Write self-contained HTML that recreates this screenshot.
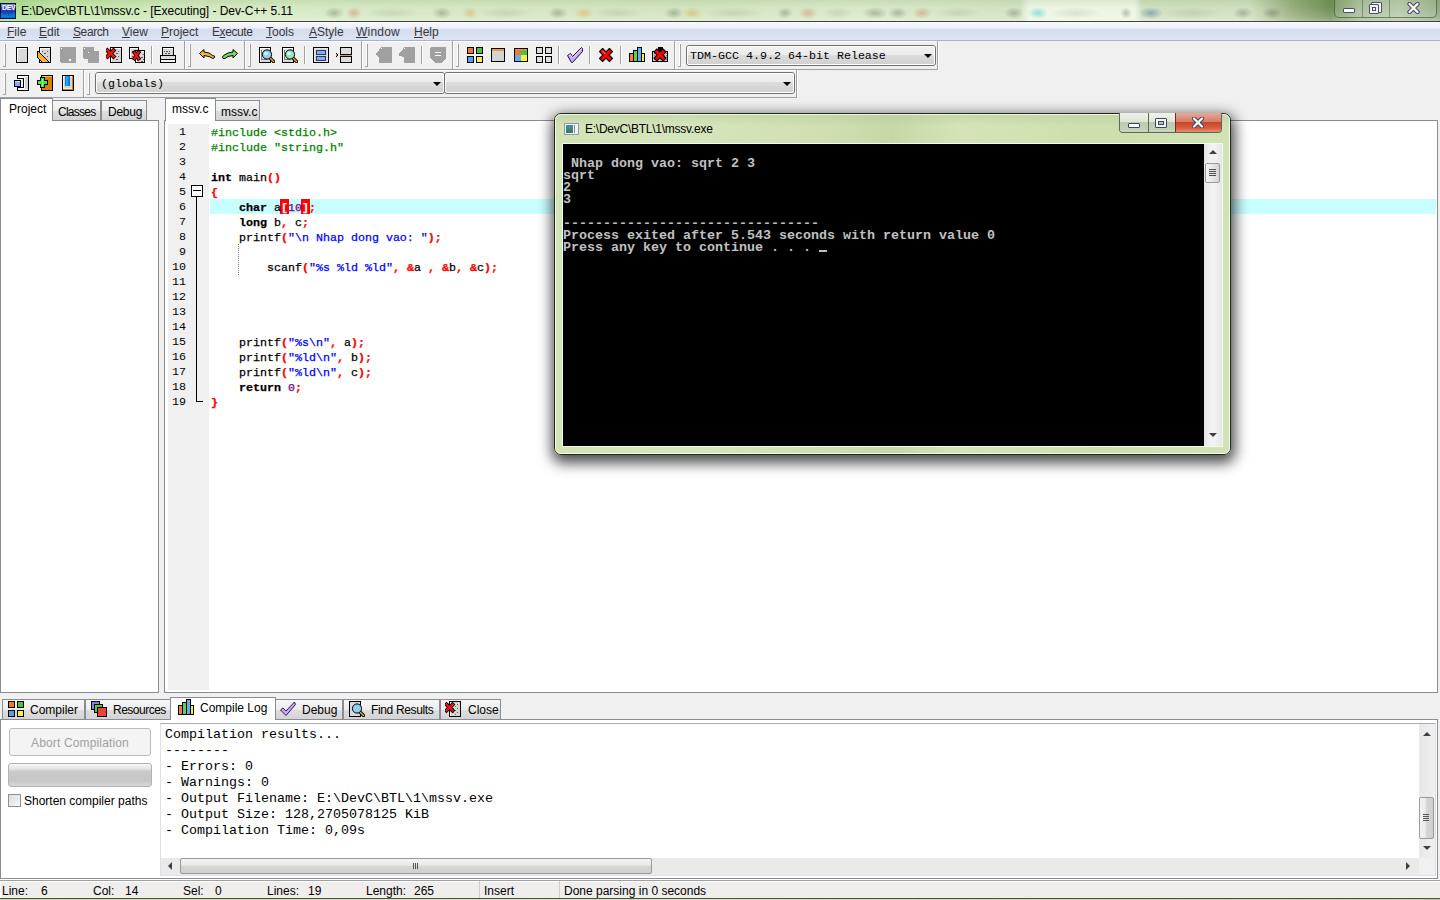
<!DOCTYPE html>
<html><head><meta charset="utf-8">
<style>
*{margin:0;padding:0;box-sizing:border-box}
html,body{width:1440px;height:900px;overflow:hidden;background:#f0f0f0;font-family:"Liberation Sans",sans-serif;font-size:12px;color:#000;position:relative}
.a{position:absolute}
#title{left:0;top:0;width:1440px;height:22px;border-bottom:1px solid #3a4a34;background:linear-gradient(180deg,rgba(90,130,60,0.12) 0,rgba(255,255,255,0) 35%,rgba(255,255,255,0.15) 80%,rgba(255,255,255,0.3) 100%),linear-gradient(90deg,#a8dc8c 0%,#c4e6a8 4.2%,#d2e8bd 13.9%,#d6e9c4 20.8%,#d4e6c2 34.7%,#d2e4c0 48.6%,#d8e8c8 59.7%,#d2e2c2 70.8%,#ecf5e2 71.5%,#ecf5e2 78.8%,#d0e0c0 79.3%,#cfdfbf 86.8%,#9ab080 89.6%,#6f8f55 92.4%,#a0b890 94.4%,#b0c4a0 97.2%,#90a880 100%)}
#title .t{position:absolute;left:21px;top:4px;color:#000;font-size:12px;letter-spacing:-0.05px}
#menu{left:0;top:22px;width:1440px;height:19px;background:linear-gradient(#f7f9fd 0,#eef2f9 30%,#d6ddef 42%,#dce3f2 100%);border-bottom:1px solid #aab4c9}
.mi{position:absolute;top:3px;color:#383838;font-size:12px}
.tbar{position:absolute;background:#f0f0f0;border-left:1px solid #fff;border-top:1px solid #fff;border-right:1px solid #a0a0a0;border-bottom:1px solid #a0a0a0}
.grip{position:absolute;width:3px;border-left:1px solid #a6a6a6;border-right:1px solid #fff}
.sep{position:absolute;width:2px;border-left:1px solid #a0a0a0;border-right:1px solid #fff;height:17px}
.ic{position:absolute;width:16px;height:16px}
.combo{position:absolute;border:1px solid #707070;border-radius:3px;background:linear-gradient(#f2f2f2 0,#ebebeb 45%,#dddddd 46%,#cfcfcf 100%)}
.combo .ct{position:absolute;left:3px;top:3px;font-family:"Liberation Mono",monospace;font-size:11.67px;color:#000;white-space:pre}
.arr{position:absolute;width:0;height:0;border-left:4px solid transparent;border-right:4px solid transparent;border-top:4px solid #000}
.combo .ci{position:absolute;left:0;top:0;right:0;bottom:0;border:1px solid #fff;border-radius:2px}
.tab{position:absolute;border:1px solid #898c95;border-bottom:none;background:linear-gradient(#f6f6f6 0,#ececec 50%,#dedede 52%,#d4d4d4 100%);font-size:12px;color:#000}
.tab.act{background:#fff}
.tab span{position:absolute;white-space:pre}
.code{position:absolute;font-family:"Liberation Mono",monospace;font-size:11.67px;white-space:pre;line-height:15px;-webkit-text-stroke:0.25px currentColor}
.k{font-weight:bold}
.g{color:#008000}
.r{color:#ff0000;font-weight:bold}
.s{color:#0000ff}
.n{color:#800080}
.ln{position:absolute;left:168px;width:18px;margin-top:1px;text-align:right;font-family:"Liberation Mono",monospace;font-size:11.67px;line-height:15px;color:#000}
.bh{color:#fff;font-weight:bold}
.st{position:absolute;margin-top:1px;font-size:12px;color:#000;white-space:pre}
</style></head><body>

<!-- TITLE BAR -->
<div id="title" class="a">
  <div class="a" style="left:0;top:0;width:1440px;height:21px;background:radial-gradient(10px 6px at 334px 13px,rgba(60,70,50,0.3),rgba(60,70,50,0)),radial-gradient(10px 6px at 442px 13px,rgba(60,70,50,0.3),rgba(60,70,50,0)),radial-gradient(10px 6px at 558px 13px,rgba(60,70,50,0.3),rgba(60,70,50,0)),radial-gradient(10px 6px at 674px 13px,rgba(60,70,50,0.3),rgba(60,70,50,0)),radial-gradient(8px 6px at 785px 13px,rgba(60,70,50,0.3),rgba(60,70,50,0)),radial-gradient(13px 6px at 875px 13px,rgba(60,70,50,0.3),rgba(60,70,50,0)),radial-gradient(10px 6px at 898px 13px,rgba(60,70,50,0.3),rgba(60,70,50,0)),radial-gradient(10px 6px at 1014px 13px,rgba(60,70,50,0.3),rgba(60,70,50,0)),radial-gradient(6px 6px at 1126px 13px,rgba(60,70,50,0.3),rgba(60,70,50,0)),radial-gradient(10px 6px at 1243px 13px,rgba(60,70,50,0.3),rgba(60,70,50,0)),radial-gradient(10px 6px at 1272px 13px,rgba(60,70,50,0.3),rgba(60,70,50,0)),radial-gradient(26px 6px at 392px 13px,rgba(90,100,80,0.14),rgba(90,100,80,0)),radial-gradient(27px 6px at 506px 13px,rgba(90,100,80,0.14),rgba(90,100,80,0)),radial-gradient(26px 6px at 618px 13px,rgba(90,100,80,0.14),rgba(90,100,80,0)),radial-gradient(30px 6px at 734px 13px,rgba(90,100,80,0.14),rgba(90,100,80,0)),radial-gradient(16px 6px at 838px 13px,rgba(90,100,80,0.14),rgba(90,100,80,0)),radial-gradient(24px 6px at 958px 13px,rgba(90,100,80,0.14),rgba(90,100,80,0)),radial-gradient(27px 6px at 1076px 13px,rgba(90,100,80,0.14),rgba(90,100,80,0)),radial-gradient(30px 6px at 1192px 13px,rgba(90,100,80,0.14),rgba(90,100,80,0)),radial-gradient(8px 6px at 470px 13px,rgba(230,150,40,0.4),rgba(230,150,40,0)),radial-gradient(10px 6px at 584px 13px,rgba(230,150,40,0.4),rgba(230,150,40,0)),radial-gradient(10px 6px at 692px 13px,rgba(230,150,40,0.4),rgba(230,150,40,0)),radial-gradient(8px 6px at 354px 13px,rgba(200,90,60,0.35),rgba(200,90,60,0)),radial-gradient(10px 6px at 808px 13px,rgba(200,90,60,0.35),rgba(200,90,60,0)),radial-gradient(10px 6px at 922px 13px,rgba(200,90,60,0.35),rgba(200,90,60,0)),radial-gradient(10px 6px at 1038px 13px,rgba(60,200,210,0.5),rgba(60,200,210,0)),radial-gradient(12px 6px at 1151px 13px,rgba(70,110,150,0.5),rgba(70,110,150,0))"></div>
  <div class="a" style="left:0;top:3px;width:16px;height:16px;background:linear-gradient(#8a8ad8 0,#3a4ab0 35%,#1a3aa0 55%,#0a70e0 70%,#0a78e8 100%);border:1px solid #0a1030"></div><div class="a" style="left:3px;top:13px;width:10px;height:1px;background:#0850a0"></div><div class="a" style="left:8px;top:11px;width:1px;height:5px;background:#0850a0"></div>
  <div class="a" style="left:2px;top:5px;font-size:7px;font-weight:bold;color:#fff;line-height:6px;letter-spacing:-0.3px">DEV</div>
  <div class="t">E:\DevC\BTL\1\mssv.c - [Executing] - Dev-C++ 5.11</div>
  <div class="a" style="left:1334px;top:-2px;width:103px;height:20px;border:1px solid rgba(40,60,30,0.55);border-radius:0 0 5px 5px;background:rgba(255,255,255,0.12)"></div>
  <div class="a" style="left:1362px;top:0;width:1px;height:17px;background:rgba(40,60,30,0.4)"></div>
  <div class="a" style="left:1389px;top:0;width:1px;height:17px;background:rgba(40,60,30,0.4)"></div>
  <div class="a" style="left:1343px;top:8px;width:12px;height:5px;background:#fff;border:1px solid #4a4f6a;border-radius:1px"></div>
  <div class="a" style="left:1371px;top:2px;width:11px;height:11px;border:1px solid #4a4f6a;background:#f5f5f5;border-radius:1px"></div>
  <div class="a" style="left:1369px;top:4px;width:10px;height:10px;border:1px solid #4a4f6a;background:#f0f0f0;border-radius:1px"></div>
  <div class="a" style="left:1372px;top:7px;width:4px;height:4px;border:1px solid #4a4f6a"></div>
  <svg class="a" style="left:1407px;top:2px" width="13" height="12" viewBox="0 0 13 12"><path d="M2.5,2 L10.5,10 M10.5,2 L2.5,10" stroke="#4a4f6a" stroke-width="4.4" stroke-linecap="round"/><path d="M2.5,2 L10.5,10 M10.5,2 L2.5,10" stroke="#fff" stroke-width="2.2" stroke-linecap="round"/></svg>
</div>

<!-- MENU -->
<div id="menu" class="a">
  <div class="mi" style="left:7px"><u>F</u>ile</div>
  <div class="mi" style="left:39px"><u>E</u>dit</div>
  <div class="mi" style="left:73px;letter-spacing:-0.4px"><u>S</u>earch</div>
  <div class="mi" style="left:122px"><u>V</u>iew</div>
  <div class="mi" style="left:161px"><u>P</u>roject</div>
  <div class="mi" style="left:212px;letter-spacing:-0.4px">E<u>x</u>ecute</div>
  <div class="mi" style="left:266px"><u>T</u>ools</div>
  <div class="mi" style="left:309px"><u>A</u>Style</div>
  <div class="mi" style="left:356px;letter-spacing:0.2px"><u>W</u>indow</div>
  <div class="mi" style="left:414px"><u>H</u>elp</div>
</div>

<!-- TOOLBARS -->
<div id="toolbars">
<div class="a" style="left:0;top:41px;width:1440px;height:28px;background:#f0f0f0"></div>
<div class="a" style="left:0;top:69px;width:938px;height:1px;background:#a0a0a0"></div>
<div class="a" style="left:0;top:97px;width:797px;height:1px;background:#a0a0a0"></div>
<div class="a" style="left:0;top:70px;width:797px;height:1px;background:#fff"></div>
<div class="a" style="left:0;top:41px;width:938px;height:1px;background:#fff"></div>
<div class="a" style="left:184px;top:41px;width:1px;height:28px;background:#a0a0a0"></div>
<div class="a" style="left:185px;top:41px;width:1px;height:28px;background:#fff"></div>
<div class="a" style="left:4px;top:44px;width:1px;height:23px;background:#fff"></div>
<div class="a" style="left:5px;top:44px;width:1px;height:23px;background:#a0a0a0"></div>
<div class="a" style="left:3px;top:66px;width:3px;height:1px;background:#a0a0a0"></div>
<div class="a" style="left:244px;top:41px;width:1px;height:28px;background:#a0a0a0"></div>
<div class="a" style="left:245px;top:41px;width:1px;height:28px;background:#fff"></div>
<div class="a" style="left:189px;top:44px;width:1px;height:23px;background:#fff"></div>
<div class="a" style="left:190px;top:44px;width:1px;height:23px;background:#a0a0a0"></div>
<div class="a" style="left:188px;top:66px;width:3px;height:1px;background:#a0a0a0"></div>
<div class="a" style="left:361px;top:41px;width:1px;height:28px;background:#a0a0a0"></div>
<div class="a" style="left:362px;top:41px;width:1px;height:28px;background:#fff"></div>
<div class="a" style="left:249px;top:44px;width:1px;height:23px;background:#fff"></div>
<div class="a" style="left:250px;top:44px;width:1px;height:23px;background:#a0a0a0"></div>
<div class="a" style="left:248px;top:66px;width:3px;height:1px;background:#a0a0a0"></div>
<div class="a" style="left:452px;top:41px;width:1px;height:28px;background:#a0a0a0"></div>
<div class="a" style="left:453px;top:41px;width:1px;height:28px;background:#fff"></div>
<div class="a" style="left:366px;top:44px;width:1px;height:23px;background:#fff"></div>
<div class="a" style="left:367px;top:44px;width:1px;height:23px;background:#a0a0a0"></div>
<div class="a" style="left:365px;top:66px;width:3px;height:1px;background:#a0a0a0"></div>
<div class="a" style="left:674px;top:41px;width:1px;height:28px;background:#a0a0a0"></div>
<div class="a" style="left:675px;top:41px;width:1px;height:28px;background:#fff"></div>
<div class="a" style="left:457px;top:44px;width:1px;height:23px;background:#fff"></div>
<div class="a" style="left:458px;top:44px;width:1px;height:23px;background:#a0a0a0"></div>
<div class="a" style="left:456px;top:66px;width:3px;height:1px;background:#a0a0a0"></div>
<div class="a" style="left:937px;top:41px;width:1px;height:28px;background:#a0a0a0"></div>
<div class="a" style="left:938px;top:41px;width:1px;height:28px;background:#fff"></div>
<div class="a" style="left:679px;top:44px;width:1px;height:23px;background:#fff"></div>
<div class="a" style="left:680px;top:44px;width:1px;height:23px;background:#a0a0a0"></div>
<div class="a" style="left:678px;top:66px;width:3px;height:1px;background:#a0a0a0"></div>
<div class="a" style="left:83px;top:70px;width:1px;height:27px;background:#a0a0a0"></div>
<div class="a" style="left:84px;top:70px;width:1px;height:27px;background:#fff"></div>
<div class="a" style="left:4px;top:73px;width:1px;height:22px;background:#fff"></div>
<div class="a" style="left:5px;top:73px;width:1px;height:22px;background:#a0a0a0"></div>
<div class="a" style="left:3px;top:94px;width:3px;height:1px;background:#a0a0a0"></div>
<div class="a" style="left:796px;top:70px;width:1px;height:27px;background:#a0a0a0"></div>
<div class="a" style="left:797px;top:70px;width:1px;height:27px;background:#fff"></div>
<div class="a" style="left:88px;top:73px;width:1px;height:22px;background:#fff"></div>
<div class="a" style="left:89px;top:73px;width:1px;height:22px;background:#a0a0a0"></div>
<div class="a" style="left:87px;top:94px;width:3px;height:1px;background:#a0a0a0"></div>
<div class="a" style="left:151px;top:46px;width:1px;height:18px;background:#a0a0a0"></div><div class="a" style="left:152px;top:46px;width:1px;height:18px;background:#fff"></div>
<div class="a" style="left:304px;top:46px;width:1px;height:18px;background:#a0a0a0"></div><div class="a" style="left:305px;top:46px;width:1px;height:18px;background:#fff"></div>
<div class="a" style="left:421px;top:46px;width:1px;height:18px;background:#a0a0a0"></div><div class="a" style="left:422px;top:46px;width:1px;height:18px;background:#fff"></div>
<div class="a" style="left:558px;top:46px;width:1px;height:18px;background:#a0a0a0"></div><div class="a" style="left:559px;top:46px;width:1px;height:18px;background:#fff"></div>
<div class="a" style="left:589px;top:46px;width:1px;height:18px;background:#a0a0a0"></div><div class="a" style="left:590px;top:46px;width:1px;height:18px;background:#fff"></div>
<div class="a" style="left:620px;top:46px;width:1px;height:18px;background:#a0a0a0"></div><div class="a" style="left:621px;top:46px;width:1px;height:18px;background:#fff"></div>
<div class="combo" style="left:686px;top:45px;width:250px;height:21px"><div class="ci"></div><div class="ct">TDM-GCC 4.9.2 64-bit Release</div><div class="arr" style="right:3px;top:8px"></div></div>
<div class="combo" style="left:95px;top:72px;width:350px;height:22px"><div class="ci"></div><div class="ct" style="left:5px;top:4px">(globals)</div><div class="arr" style="right:3px;top:9px"></div></div>
<div class="combo" style="left:444px;top:72px;width:351px;height:22px"><div class="ci"></div><div class="arr" style="right:3px;top:9px"></div></div>
<svg class="a" style="left:14px;top:47px" width="16" height="16" viewBox="0 0 16 16" shape-rendering="crispEdges"><rect x="2" y="0" width="12" height="16" fill="#000"/><rect x="3" y="1" width="10" height="14" fill="#fff"/><rect x="4" y="2" width="9" height="13" fill="#d9d9d9"/></svg>
<svg class="a" style="left:36px;top:47px" width="16" height="16" viewBox="0 0 16 16" shape-rendering="crispEdges"><rect x="3" y="0" width="12" height="16" fill="#000"/><rect x="4" y="1" width="10" height="14" fill="#fff"/><rect x="5" y="2" width="9" height="13" fill="#d6d6d6"/><rect x="6" y="4" width="1" height="1" fill="#555"/><rect x="11" y="4" width="1" height="1" fill="#555"/><rect x="8" y="6" width="2" height="1" fill="#555"/><rect x="6" y="9" width="1" height="1" fill="#555"/><rect x="11" y="9" width="1" height="1" fill="#555"/><rect x="8" y="12" width="2" height="1" fill="#555"/><path d="M1,4 h2 v1 L13,15 h-8 L1,10 Z" fill="#000"/><path d="M2,5 L12,15 h-6 L2,10 Z" fill="#ffb030"/></svg>
<svg class="a" style="left:60px;top:47px" width="16" height="16" viewBox="0 0 16 16" shape-rendering="crispEdges"><path d="M0,0 h16 v16 h-15 l-1,-1 Z" fill="#a0a0a0"/><rect x="1" y="1" width="1" height="1" fill="#fff"/><rect x="9" y="12" width="2" height="2" fill="#fff"/></svg>
<svg class="a" style="left:83px;top:47px" width="16" height="16" viewBox="0 0 16 16" shape-rendering="crispEdges"><path d="M0,0 h11 v4 h5 v12 h-11 v-4 h-4 l-1,-1 Z" fill="#a0a0a0"/><rect x="1" y="1" width="1" height="1" fill="#fff"/><rect x="5" y="5" width="1" height="1" fill="#fff"/></svg>
<svg class="a" style="left:106px;top:47px" width="16" height="16" viewBox="0 0 16 16" shape-rendering="crispEdges"><rect x="4" y="0" width="12" height="16" fill="#000"/><rect x="5" y="1" width="10" height="14" fill="#fff"/><rect x="6" y="2" width="9" height="13" fill="#d6d6d6"/><rect x="7" y="4" width="1" height="1" fill="#555"/><rect x="12" y="4" width="1" height="1" fill="#555"/><rect x="10" y="6" width="2" height="1" fill="#555"/><rect x="7" y="9" width="1" height="1" fill="#555"/><rect x="12" y="9" width="1" height="1" fill="#555"/><rect x="10" y="12" width="2" height="1" fill="#555"/><g shape-rendering="auto"><path d="M1.5,3.5 L7.5,9.5 M7.5,3.5 L1.5,9.5" stroke="#000" stroke-width="4.2" stroke-linecap="square"/><path d="M1.5,3.5 L7.5,9.5 M7.5,3.5 L1.5,9.5" stroke="#ff1010" stroke-width="2.4" stroke-linecap="square"/></g></svg>
<svg class="a" style="left:129px;top:47px" width="16" height="16" viewBox="0 0 16 16" shape-rendering="crispEdges"><rect x="0" y="0" width="10" height="12" fill="#000"/><rect x="1" y="1" width="8" height="10" fill="#fff"/><rect x="2" y="2" width="7" height="9" fill="#d6d6d6"/><rect x="3" y="4" width="1" height="1" fill="#555"/><rect x="8" y="4" width="1" height="1" fill="#555"/><rect x="6" y="6" width="2" height="1" fill="#555"/><rect x="3" y="9" width="1" height="1" fill="#555"/><rect x="8" y="9" width="1" height="1" fill="#555"/><rect x="6" y="12" width="2" height="1" fill="#555"/><rect x="6" y="3" width="10" height="13" fill="#000"/><rect x="7" y="4" width="8" height="11" fill="#fff"/><rect x="8" y="5" width="7" height="10" fill="#d6d6d6"/><rect x="9" y="7" width="1" height="1" fill="#555"/><rect x="14" y="7" width="1" height="1" fill="#555"/><rect x="12" y="10" width="2" height="1" fill="#555"/><rect x="9" y="12" width="1" height="1" fill="#555"/><rect x="14" y="12" width="1" height="1" fill="#555"/><rect x="12" y="14" width="2" height="1" fill="#555"/><g shape-rendering="auto"><path d="M5.5,5.5 L9.5,11.5 M9.5,5.5 L5.5,11.5" stroke="#000" stroke-width="4" stroke-linecap="square"/><path d="M5.5,5.5 L9.5,11.5 M9.5,5.5 L5.5,11.5" stroke="#ff1010" stroke-width="2.2" stroke-linecap="square"/></g></svg>
<svg class="a" style="left:160px;top:47px" width="16" height="16" viewBox="0 0 16 16" shape-rendering="crispEdges"><rect x="2" y="0" width="12" height="9" fill="#000"/><rect x="3" y="1" width="10" height="8" fill="#d8d8d8"/><rect x="4" y="4" width="1" height="1" fill="#555"/><rect x="6" y="4" width="2" height="1" fill="#555"/><rect x="9" y="4" width="1" height="1" fill="#555"/><rect x="5" y="6" width="2" height="1" fill="#555"/><rect x="8" y="6" width="2" height="1" fill="#555"/><rect x="3" y="1" width="10" height="1" fill="#fff"/><rect x="0" y="8" width="16" height="8" fill="#000"/><rect x="1" y="9" width="14" height="3" fill="#dcdcdc"/><rect x="1" y="13" width="14" height="2" fill="#fff"/></svg>
<svg class="a" style="left:199px;top:49px" width="16" height="11" viewBox="0 0 16 11" shape-rendering="crispEdges"><g shape-rendering="auto"><path d="M0.5,4.5 L5,0.5 L5,3 L10,4 L13.5,6.5 L15.5,7 L15.5,8.5 L14,9.5 L10,7.5 L5,6.5 L5,9 Z" fill="#ffb732" stroke="#000" stroke-width="1"/></g></svg>
<svg class="a" style="left:222px;top:49px" width="16" height="11" viewBox="0 0 16 11" shape-rendering="crispEdges"><g shape-rendering="auto"><path d="M15.5,4.5 L11,0.5 L11,3 L6,4 L1.5,6.5 L0.5,8 L1,9.5 L3,9.5 L6,7.5 L11,6.5 L11,9 Z" fill="#6fdc5a" stroke="#000" stroke-width="1"/></g></svg>
<svg class="a" style="left:259px;top:47px" width="16" height="16" viewBox="0 0 16 16" shape-rendering="crispEdges"><rect x="0" y="0" width="12" height="16" fill="#000"/><rect x="1" y="1" width="10" height="14" fill="#fff"/><rect x="2" y="2" width="9" height="13" fill="#dadada"/><rect x="2" y="3" width="1" height="9" fill="#777"/><rect x="2" y="12" width="6" height="1" fill="#777"/><g shape-rendering="auto"><path d="M10.5,10.5 L14.5,14.5" stroke="#000" stroke-width="3.2" stroke-linecap="round"/><path d="M10.5,10.5 L14.5,14.5" stroke="#f0a020" stroke-width="1.6" stroke-linecap="round"/><circle cx="8" cy="7.5" r="4.6" fill="#8fd0f0" stroke="#000" stroke-width="1"/><circle cx="7" cy="6.5" r="1.8" fill="#fff" opacity="0.7"/></g></svg>
<svg class="a" style="left:282px;top:47px" width="16" height="16" viewBox="0 0 16 16" shape-rendering="crispEdges"><rect x="0" y="0" width="12" height="16" fill="#000"/><rect x="1" y="1" width="10" height="14" fill="#fff"/><rect x="2" y="2" width="9" height="13" fill="#dadada"/><rect x="2" y="3" width="1" height="9" fill="#777"/><rect x="2" y="12" width="6" height="1" fill="#777"/><g shape-rendering="auto"><path d="M10.5,10.5 L14.5,14.5" stroke="#000" stroke-width="3.2" stroke-linecap="round"/><path d="M10.5,10.5 L14.5,14.5" stroke="#f0a020" stroke-width="1.6" stroke-linecap="round"/><circle cx="8" cy="7.5" r="4.6" fill="#8fe8c0" stroke="#000" stroke-width="1"/><circle cx="7" cy="6.5" r="1.8" fill="#fff" opacity="0.7"/></g></svg>
<svg class="a" style="left:313px;top:47px" width="16" height="16" viewBox="0 0 16 16" shape-rendering="crispEdges"><rect x="0" y="0" width="16" height="16" fill="#000"/><rect x="1" y="1" width="14" height="14" fill="#e8e8e8"/><rect x="2" y="2" width="12" height="12" fill="#d4d4d4"/><rect x="3" y="3" width="10" height="5" fill="#2a3a6a"/><rect x="4" y="4" width="8" height="3" fill="#80b0f0"/><rect x="3" y="9" width="10" height="5" fill="#2a3a6a"/><rect x="4" y="10" width="8" height="3" fill="#80b0f0"/></svg>
<svg class="a" style="left:336px;top:47px" width="16" height="16" viewBox="0 0 16 16" shape-rendering="crispEdges"><path d="M0,6 L2,8 L0,10 Z" fill="#000"/><path d="M0,7 L1,8 L0,9Z" fill="#f0a010"/><rect x="4" y="0" width="12" height="16" fill="#000"/><rect x="5" y="1" width="10" height="6" fill="#dcdcdc"/><rect x="5" y="10" width="10" height="5" fill="#dcdcdc"/><rect x="4" y="7" width="12" height="3" fill="#000"/><rect x="4" y="8" width="12" height="1" fill="#f0a010"/></svg>
<svg class="a" style="left:376px;top:47px" width="16" height="16" viewBox="0 0 16 16" shape-rendering="crispEdges"><path d="M5,0 h11 v16 h-13 v-6 l-3,-2 v-2 l3,-3 Z" fill="#a0a0a0"/><rect x="5" y="1" width="1" height="1" fill="#fff"/></svg>
<svg class="a" style="left:399px;top:47px" width="16" height="16" viewBox="0 0 16 16" shape-rendering="crispEdges"><path d="M5,0 h11 v16 h-11 v-6 l-5,-1 v-3 l3,-2 Z" fill="#a0a0a0"/><rect x="5" y="1" width="1" height="1" fill="#fff"/></svg>
<svg class="a" style="left:430px;top:47px" width="16" height="16" viewBox="0 0 16 16" shape-rendering="crispEdges"><path d="M1,0 h14 l1,1 v10 l-5,5 h-6 l-5,-5 v-10 Z" fill="#a0a0a0"/><rect x="5" y="5" width="6" height="1" fill="#fff"/><rect x="5" y="8" width="6" height="1" fill="#fff"/></svg>
<svg class="a" style="left:467px;top:47px" width="16" height="16" viewBox="0 0 16 16" shape-rendering="crispEdges"><rect x="0" y="0" width="7" height="7" fill="#000"/><rect x="1" y="1" width="5" height="5" fill="#f07830"/><rect x="9" y="0" width="7" height="7" fill="#000"/><rect x="10" y="1" width="5" height="5" fill="#50c040"/><rect x="0" y="9" width="7" height="7" fill="#000"/><rect x="1" y="10" width="5" height="5" fill="#50a0f0"/><rect x="9" y="9" width="7" height="7" fill="#000"/><rect x="10" y="10" width="5" height="5" fill="#f8f040"/></svg>
<svg class="a" style="left:490px;top:47px" width="16" height="16" viewBox="0 0 16 16" shape-rendering="crispEdges"><rect x="1" y="1" width="14" height="14" fill="#000"/><rect x="2" y="2" width="12" height="2" fill="#f0a010"/><rect x="2" y="4" width="12" height="10" fill="#d4d4d4"/></svg>
<svg class="a" style="left:513px;top:47px" width="16" height="16" viewBox="0 0 16 16" shape-rendering="crispEdges"><rect x="1" y="1" width="14" height="14" fill="#000"/><rect x="2" y="2" width="12" height="1" fill="#f0a010"/><rect x="2" y="3" width="6" height="5" fill="#f07830"/><rect x="8" y="3" width="6" height="5" fill="#50c040"/><rect x="2" y="8" width="6" height="6" fill="#60b0f0"/><rect x="8" y="8" width="6" height="6" fill="#f8f040"/></svg>
<svg class="a" style="left:536px;top:47px" width="16" height="16" viewBox="0 0 16 16" shape-rendering="crispEdges"><rect x="0" y="0" width="7" height="7" fill="#000"/><rect x="1" y="1" width="5" height="5" fill="#dcdcdc"/><rect x="9" y="0" width="7" height="7" fill="#000"/><rect x="10" y="1" width="5" height="5" fill="#dcdcdc"/><rect x="0" y="9" width="7" height="7" fill="#000"/><rect x="1" y="10" width="5" height="5" fill="#dcdcdc"/><rect x="9" y="9" width="7" height="7" fill="#000"/><rect x="10" y="10" width="5" height="5" fill="#dcdcdc"/></svg>
<svg class="a" style="left:567px;top:47px" width="16" height="16" viewBox="0 0 16 16"><path d="M0.5,8.5 L3.5,6.5 L5.5,9.5 L14.5,0.5 L15.5,1.5 L15.5,4.5 L5.5,15.5 L4.5,15.5 Z" fill="#c8a8f8" stroke="#20103a" stroke-width="1" stroke-linejoin="round"/><path d="M2,8.5 L3.3,7.8 L5.5,11 L14.5,2" stroke="#e8d8ff" stroke-width="1" fill="none"/></svg>
<svg class="a" style="left:598px;top:47px" width="16" height="16" viewBox="0 0 16 16"><path d="M1.50,4.60 L4.60,1.50 L8.00,4.90 L11.40,1.50 L14.50,4.60 L11.10,8.00 L14.50,11.40 L11.40,14.50 L8.00,11.10 L4.60,14.50 L1.50,11.40 L4.90,8.00 Z" fill="#f00" stroke="#000" stroke-width="1.1" stroke-linejoin="round"/><path d="M4,3.6 L7.6,7.2" stroke="#ff9090" stroke-width="1"/></svg>
<svg class="a" style="left:629px;top:47px" width="16" height="16" viewBox="0 0 16 16" shape-rendering="crispEdges"><rect x="0" y="6" width="5" height="9" fill="#000"/><rect x="1" y="7" width="3" height="7" fill="#f08040"/><rect x="4" y="3" width="5" height="12" fill="#000"/><rect x="5" y="4" width="3" height="10" fill="#60d050"/><rect x="8" y="0" width="5" height="15" fill="#000"/><rect x="9" y="1" width="3" height="13" fill="#60b0f0"/><rect x="12" y="6" width="4" height="9" fill="#000"/><rect x="13" y="7" width="2" height="7" fill="#f8f040"/></svg>
<svg class="a" style="left:652px;top:47px" width="16" height="16" viewBox="0 0 16 16"><g shape-rendering="crispEdges"><rect x="0" y="4" width="16" height="11" fill="#000"/><rect x="1" y="5" width="14" height="9" fill="#d0d0d0"/><rect x="6" y="0" width="5" height="4" fill="#000"/><rect x="2" y="6" width="1" height="1" fill="#777"/><rect x="4" y="6" width="1" height="1" fill="#777"/><rect x="6" y="6" width="1" height="1" fill="#777"/><rect x="8" y="6" width="1" height="1" fill="#777"/><rect x="10" y="6" width="1" height="1" fill="#777"/><rect x="12" y="6" width="1" height="1" fill="#777"/><rect x="14" y="6" width="1" height="1" fill="#777"/><rect x="2" y="8" width="1" height="1" fill="#777"/><rect x="4" y="8" width="1" height="1" fill="#777"/><rect x="6" y="8" width="1" height="1" fill="#777"/><rect x="8" y="8" width="1" height="1" fill="#777"/><rect x="10" y="8" width="1" height="1" fill="#777"/><rect x="12" y="8" width="1" height="1" fill="#777"/><rect x="14" y="8" width="1" height="1" fill="#777"/><rect x="2" y="10" width="1" height="1" fill="#777"/><rect x="4" y="10" width="1" height="1" fill="#777"/><rect x="6" y="10" width="1" height="1" fill="#777"/><rect x="8" y="10" width="1" height="1" fill="#777"/><rect x="10" y="10" width="1" height="1" fill="#777"/><rect x="12" y="10" width="1" height="1" fill="#777"/><rect x="14" y="10" width="1" height="1" fill="#777"/><rect x="2" y="12" width="1" height="1" fill="#777"/><rect x="4" y="12" width="1" height="1" fill="#777"/><rect x="6" y="12" width="1" height="1" fill="#777"/><rect x="8" y="12" width="1" height="1" fill="#777"/><rect x="10" y="12" width="1" height="1" fill="#777"/><rect x="12" y="12" width="1" height="1" fill="#777"/><rect x="14" y="12" width="1" height="1" fill="#777"/></g><path d="M2.00,4.90 L4.90,2.00 L8.00,5.10 L11.10,2.00 L14.00,4.90 L10.90,8.00 L14.00,11.10 L11.10,14.00 L8.00,10.90 L4.90,14.00 L2.00,11.10 L5.10,8.00 Z" fill="#f00" stroke="#000" stroke-width="1.1" stroke-linejoin="round"/></svg>
<svg class="a" style="left:14px;top:75px" width="16" height="16" viewBox="0 0 16 16" shape-rendering="crispEdges"><path d="M3,0 h12 v16 h-12 v-4 h6 v-8 h-6 Z" fill="#000"/><path d="M4,1 h10 v14 h-10 v-2 h6 v-10 h-6 Z" fill="#fff"/><rect x="11" y="2" width="3" height="12" fill="#d4d4d4"/><rect x="0" y="5" width="7" height="7" fill="#000"/><rect x="1" y="6" width="5" height="5" fill="#7fb0f0"/><rect x="1" y="6" width="5" height="1" fill="#c0dcff"/></svg>
<svg class="a" style="left:37px;top:75px" width="16" height="16" viewBox="0 0 16 16" shape-rendering="crispEdges"><rect x="4" y="0" width="12" height="16" fill="#000"/><rect x="5" y="1" width="10" height="14" fill="#d88000"/><rect x="5" y="1" width="10" height="1" fill="#ffc060"/><path d="M3,2 h5 v3 h3 v5 h-3 v3 h-5 v-3 h-3 v-5 h3 Z" fill="#000"/><path d="M4,3 h3 v3 h3 v3 h-3 v3 h-3 v-3 h-3 v-3 h3 Z" fill="#40f040"/><rect x="5" y="4" width="1" height="7" fill="#a0ffa0"/></svg>
<svg class="a" style="left:62px;top:75px" width="12" height="16" viewBox="0 0 12 16" shape-rendering="crispEdges"><rect x="0" y="0" width="12" height="16" fill="#000"/><rect x="1" y="1" width="10" height="14" fill="#d88000"/><rect x="1" y="1" width="9" height="13" fill="#f0f0f0"/><rect x="2" y="2" width="8" height="11" fill="#d4d4d4"/><rect x="3" y="1" width="5" height="10" fill="#1080d0"/><rect x="4" y="1" width="2" height="10" fill="#2aa0f0"/></svg>
</div>

<!-- LEFT PANEL -->
<div class="a" style="left:0;top:120px;width:159px;height:573px;background:#fff;border:1px solid #898c95"></div>
<div class="tab act" style="left:0;top:98px;width:53px;height:23px;border-bottom:none"><span style="left:8px;top:3px">Project</span></div>
<div class="tab" style="left:52px;top:100px;width:49px;height:20px"><span style="left:5px;top:4px;letter-spacing:-0.75px">Classes</span></div>
<div class="tab" style="left:101px;top:100px;width:46px;height:20px"><span style="left:6px;top:4px;letter-spacing:-0.25px">Debug</span></div>

<!-- EDITOR -->
<div class="a" style="left:164px;top:120px;width:1274px;height:573px;background:#fff;border:1px solid #898c95"></div>
<div class="a" style="left:168px;top:124px;width:41px;height:566px;background:#f0f0f0"></div>
<div class="a" style="left:210px;top:199px;width:1226px;height:15px;background:#c8ffff"></div>
<div class="tab act" style="left:165px;top:98px;width:51px;height:23px"><span style="left:6px;top:3px">mssv.c</span></div>
<div class="tab" style="left:215px;top:100px;width:45px;height:20px"><span style="left:5px;top:4px">mssv.c</span></div>

<div id="gutter" class="a" style="left:168px;top:124px">
</div>
<div id="codearea">
<div class="ln" style="top:124px">1</div>
<div class="ln" style="top:139px">2</div>
<div class="ln" style="top:154px">3</div>
<div class="ln" style="top:169px">4</div>
<div class="ln" style="top:184px">5</div>
<div class="ln" style="top:199px">6</div>
<div class="ln" style="top:214px">7</div>
<div class="ln" style="top:229px">8</div>
<div class="ln" style="top:244px">9</div>
<div class="ln" style="top:259px">10</div>
<div class="ln" style="top:274px">11</div>
<div class="ln" style="top:289px">12</div>
<div class="ln" style="top:304px">13</div>
<div class="ln" style="top:319px">14</div>
<div class="ln" style="top:334px">15</div>
<div class="ln" style="top:349px">16</div>
<div class="ln" style="top:364px">17</div>
<div class="ln" style="top:379px">18</div>
<div class="ln" style="top:394px">19</div>
<div class="a" style="left:280px;top:199px;width:9px;height:15px;background:#f00"></div><div class="a" style="left:301px;top:199px;width:9px;height:15px;background:#f00"></div>
<div class="code" style="left:211px;top:126px"><span class="g">#include &lt;stdio.h&gt;</span>
<span class="g">#include "string.h"</span>

<span class="k">int</span> main<span class="r">()</span>
<span class="r">{</span>
    <span class="k">char</span> a<span class="bh">[</span><span class="n">10</span><span class="bh">]</span><span class="r">;</span>
    <span class="k">long</span> b<span class="r">,</span> c<span class="r">;</span>
    printf<span class="r">(</span><span class="s">"\n Nhap dong vao: "</span><span class="r">);</span>

        scanf<span class="r">(</span><span class="s">"%s %ld %ld"</span><span class="r">,</span> <span class="r">&amp;</span>a <span class="r">,</span> <span class="r">&amp;</span>b<span class="r">,</span> <span class="r">&amp;</span>c<span class="r">);</span>




    printf<span class="r">(</span><span class="s">"%s\n"</span><span class="r">,</span> a<span class="r">);</span>
    printf<span class="r">(</span><span class="s">"%ld\n"</span><span class="r">,</span> b<span class="r">);</span>
    printf<span class="r">(</span><span class="s">"%ld\n"</span><span class="r">,</span> c<span class="r">);</span>
    <span class="k">return</span> <span class="n">0</span><span class="r">;</span>
<span class="r">}</span></div>
</div>

<div class="a" style="left:191px;top:185px;width:12px;height:12px;border:1px solid #000;background:#fff"></div>
<div class="a" style="left:193px;top:190px;width:8px;height:1px;background:#000"></div>
<div class="a" style="left:196px;top:197px;width:1px;height:205px;background:#000"></div>
<div class="a" style="left:196px;top:401px;width:7px;height:1px;background:#000"></div>
<div class="a" style="left:238px;top:244px;width:1px;height:31px;background:repeating-linear-gradient(#808080 0 1px,transparent 1px 2px)"></div>

<!-- CONSOLE (inserted) -->
<div id="console">
<div class="a" style="left:554px;top:113px;width:677px;height:342px;border-radius:7px;box-shadow:1px 5px 14px 3px rgba(0,0,0,0.7)"></div>
<div class="a" style="left:554px;top:113px;width:677px;height:342px;border-radius:7px;border:1px solid #1e2a18;background:linear-gradient(180deg,rgba(170,190,140,0.35) 0,rgba(170,190,140,0) 12px),linear-gradient(90deg,#d2e3b6 0%,#d6e6bc 20%,#cfdfb2 40%,#c6d8a8 50%,#d4e4b8 60%,#cddfae 80%,#d2e2b6 100%)"></div>
<div class="a" style="left:555px;top:114px;width:675px;height:340px;border-radius:6px;border:1px solid rgba(255,255,255,0.75)"></div>

<div class="a" style="left:564px;top:123px;width:15px;height:12px;border:1px solid #8a9aa8;background:#f4f4f4"></div>
<div class="a" style="left:566px;top:125px;width:7px;height:8px;background:linear-gradient(#4a8ab0,#3c7a50)"></div>
<div class="a" style="left:574px;top:125px;width:1px;height:8px;background:#7a8a98"></div>
<div class="a" style="left:585px;top:122px;font-size:12px;color:#000;white-space:pre;letter-spacing:-0.25px">E:\DevC\BTL\1\mssv.exe</div>
<div class="a" style="left:1119px;top:113px;width:103px;height:20px;border:1px solid #5a6a58;border-top:none;border-radius:0 0 4px 4px;overflow:hidden"><div class="a" style="left:0;top:0;width:28px;height:19px;background:linear-gradient(#eef2e8 0,#dfe6d6 45%,#bccaae 50%,#c8d4bc 100%)"></div><div class="a" style="left:28px;top:0;width:1px;height:19px;background:#5a6a58"></div><div class="a" style="left:29px;top:0;width:26px;height:19px;background:linear-gradient(#eef2e8 0,#dfe6d6 45%,#bccaae 50%,#c8d4bc 100%)"></div><div class="a" style="left:55px;top:0;width:1px;height:19px;background:#6a3028"></div><div class="a" style="left:56px;top:0;width:47px;height:19px;background:linear-gradient(#e8a898 0,#d87c68 45%,#c8442a 50%,#d86040 80%,#e89070 100%)"></div></div>
<div class="a" style="left:1128px;top:123px;width:12px;height:5px;background:#fff;border:1px solid #3c4660;border-radius:1px"></div>
<div class="a" style="left:1155px;top:118px;width:12px;height:10px;background:#f4f4f4;border:1px solid #3c4660;border-radius:1px"></div>
<div class="a" style="left:1158px;top:121px;width:6px;height:4px;background:#b8c8a8;border:1px solid #3c4660"></div>
<svg class="a" style="left:1192px;top:117px" width="12" height="11" viewBox="0 0 12 11"><path d="M2,1.5 L10,9.5 M10,1.5 L2,9.5" stroke="#3c4660" stroke-width="4.2" stroke-linecap="round"/><path d="M2,1.5 L10,9.5 M10,1.5 L2,9.5" stroke="#fff" stroke-width="2.2" stroke-linecap="round"/></svg>
<div class="a" style="left:562px;top:143px;width:661px;height:304px;border:1px solid #f4faec"></div>
<div class="a" style="left:563px;top:144px;width:641px;height:302px;background:#000"></div>
<div class="a" style="left:1204px;top:144px;width:18px;height:302px;background:linear-gradient(90deg,#e6e6e6,#f2f2f2 40%,#f2f2f2 60%,#e6e6e6)"></div>
<svg class="a" style="left:1209px;top:150px" width="8" height="5"><path d="M0,4 L4,0 L8,4 Z" fill="#404040"/></svg>
<svg class="a" style="left:1209px;top:433px" width="8" height="5"><path d="M0,0 L8,0 L4,4 Z" fill="#404040"/></svg>
<div class="a" style="left:1205px;top:163px;width:15px;height:20px;border:1px solid #9a9a9a;border-radius:2px;background:linear-gradient(90deg,#f4f4f4,#e8e8e8 50%,#d4d4d4)"></div>
<div class="a" style="left:1209px;top:169px;width:7px;height:1px;background:#505050"></div>
<div class="a" style="left:1209px;top:171px;width:7px;height:1px;background:#505050"></div>
<div class="a" style="left:1209px;top:173px;width:7px;height:1px;background:#505050"></div>
<div class="a" style="left:1209px;top:175px;width:7px;height:1px;background:#505050"></div>
<div class="a" style="left:563px;top:146px;font-family:'Liberation Mono',monospace;font-weight:bold;font-size:13.33px;line-height:12px;color:#c0c0c0;white-space:pre">
 Nhap dong vao: sqrt 2 3
sqrt
2
3

--------------------------------
Process exited after 5.543 seconds with return value 0
Press any key to continue . . . </div>
<div class="a" style="left:819px;top:250px;width:8px;height:2px;background:#c0c0c0"></div>

</div>

<!-- BOTTOM -->
<div id="bottom">
<div class="a" style="left:0;top:719px;width:1438px;height:160px;background:#fff;border:1px solid #898c95;border-bottom:none"></div>
<div class="tab" style="left:2px;top:699px;width:83px;height:20px"></div>
<div class="tab" style="left:85px;top:699px;width:86px;height:20px"></div>
<div class="tab" style="left:275px;top:699px;width:68px;height:20px"></div>
<div class="tab" style="left:343px;top:699px;width:97px;height:20px"></div>
<div class="tab" style="left:440px;top:699px;width:61px;height:20px"></div>
<div class="tab act" style="left:170px;top:697px;width:106px;height:23px"></div>
<div class="a" style="left:30px;top:703px;font-size:12px;white-space:pre;">Compiler</div>
<div class="a" style="left:113px;top:703px;font-size:12px;white-space:pre;letter-spacing:-0.5px">Resources</div>
<div class="a" style="left:200px;top:701px;font-size:12px;white-space:pre;">Compile Log</div>
<div class="a" style="left:302px;top:703px;font-size:12px;white-space:pre;">Debug</div>
<div class="a" style="left:371px;top:703px;font-size:12px;white-space:pre;letter-spacing:-0.35px">Find Results</div>
<div class="a" style="left:468px;top:703px;font-size:12px;white-space:pre;">Close</div>
<svg class="a" style="left:8px;top:701px" width="16" height="16" viewBox="0 0 16 16" shape-rendering="crispEdges"><rect x="0" y="0" width="7" height="7" fill="#000"/><rect x="1" y="1" width="5" height="5" fill="#f07830"/><rect x="9" y="0" width="7" height="7" fill="#000"/><rect x="10" y="1" width="5" height="5" fill="#50c040"/><rect x="0" y="9" width="7" height="7" fill="#000"/><rect x="1" y="10" width="5" height="5" fill="#50a0f0"/><rect x="9" y="9" width="7" height="7" fill="#000"/><rect x="10" y="10" width="5" height="5" fill="#f8f040"/></svg>
<svg class="a" style="left:91px;top:701px" width="16" height="16" viewBox="0 0 16 16" shape-rendering="crispEdges"><rect x="0" y="0" width="9" height="9" fill="#000"/><rect x="1" y="1" width="7" height="7" fill="#8080f0"/><rect x="3" y="3" width="9" height="9" fill="#000"/><rect x="4" y="4" width="7" height="7" fill="#40d040"/><rect x="6" y="6" width="10" height="10" fill="#000"/><rect x="7" y="7" width="8" height="8" fill="#f04040"/></svg>
<svg class="a" style="left:178px;top:699px" width="16" height="16" viewBox="0 0 16 16" shape-rendering="crispEdges"><rect x="0" y="6" width="5" height="10" fill="#000"/><rect x="1" y="7" width="3" height="8" fill="#f08040"/><rect x="4" y="3" width="5" height="13" fill="#000"/><rect x="5" y="4" width="3" height="11" fill="#60d050"/><rect x="8" y="0" width="5" height="16" fill="#000"/><rect x="9" y="1" width="3" height="14" fill="#60b0f0"/><rect x="12" y="6" width="4" height="10" fill="#000"/><rect x="13" y="7" width="2" height="8" fill="#f8f040"/></svg>
<svg class="a" style="left:280px;top:701px" width="16" height="16" viewBox="0 0 16 16" shape-rendering="crispEdges"><g shape-rendering="auto"><path d="M0.5,9 L3,7 L6,10 L14.5,1 L15.5,3.5 L6,14.5 Z" fill="#c8a8f8" stroke="#2a1a50" stroke-width="1"/></g></svg>
<svg class="a" style="left:349px;top:701px" width="16" height="16" viewBox="0 0 16 16" shape-rendering="crispEdges"><rect x="0" y="0" width="12" height="16" fill="#000"/><rect x="1" y="1" width="10" height="14" fill="#dadada"/><g shape-rendering="auto"><path d="M10.5,10.5 L14.5,14.5" stroke="#000" stroke-width="3.2" stroke-linecap="round"/><path d="M10.5,10.5 L14.5,14.5" stroke="#f0a020" stroke-width="1.6" stroke-linecap="round"/><circle cx="8" cy="7.5" r="4.6" fill="#8fd0f0" stroke="#000" stroke-width="1"/></g></svg>
<svg class="a" style="left:445px;top:701px" width="16" height="16" viewBox="0 0 16 16" shape-rendering="crispEdges"><rect x="4" y="0" width="12" height="16" fill="#000"/><rect x="5" y="1" width="10" height="14" fill="#d6d6d6"/><rect x="5" y="1" width="1" height="14" fill="#fff"/><rect x="8" y="3" width="1" height="1" fill="#666"/><rect x="12" y="3" width="1" height="1" fill="#666"/><rect x="10" y="5" width="1" height="1" fill="#666"/><rect x="8" y="7" width="1" height="1" fill="#666"/><rect x="12" y="7" width="1" height="1" fill="#666"/><rect x="10" y="9" width="1" height="1" fill="#666"/><rect x="8" y="11" width="1" height="1" fill="#666"/><rect x="12" y="11" width="1" height="1" fill="#666"/><rect x="10" y="13" width="1" height="1" fill="#666"/><g shape-rendering="auto"><path d="M1.5,3.5 L7.5,9.5 M7.5,3.5 L1.5,9.5" stroke="#000" stroke-width="4" stroke-linecap="square"/><path d="M1.5,3.5 L7.5,9.5 M7.5,3.5 L1.5,9.5" stroke="#ff1010" stroke-width="2.2" stroke-linecap="square"/></g></svg>
<div class="a" style="left:9px;top:728px;width:142px;height:28px;border:1px solid #bcbcbc;border-radius:3px;background:#f4f4f4"></div>
<div class="a" style="left:31px;top:736px;font-size:12px;white-space:pre;color:#a0a0a0;letter-spacing:0.15px">Abort Compilation</div>
<div class="a" style="left:8px;top:763px;width:144px;height:24px;border:1px solid #b2b2b2;border-radius:3px;background:linear-gradient(#f8f8f8 0,#e6e6e6 20%,#c9c9c9 35%,#c6c6c6 75%,#d8d8d8 100%)"></div>
<div class="a" style="left:8px;top:794px;width:13px;height:13px;border:1px solid #8e8f8f;background:linear-gradient(135deg,#dcdcdc,#f8f8f8)"></div>
<div class="a" style="left:24px;top:794px;font-size:12px;white-space:pre;">Shorten compiler paths</div>
<div class="a" style="left:160px;top:723px;width:1276px;height:153px;border:1px solid #dde0e6;border-top-color:#a8abb2;background:#fff"></div>
<div class="a" style="left:165px;top:727px;font-family:'Liberation Mono',monospace;font-size:13.33px;line-height:16px;white-space:pre;color:#000">Compilation results...
--------
- Errors: 0
- Warnings: 0
- Output Filename: E:\DevC\BTL\1\mssv.exe
- Output Size: 128,2705078125 KiB
- Compilation Time: 0,09s</div>
<div class="a" style="left:161px;top:858px;width:1258px;height:17px;background:#eaeaea"></div>
<div class="a" style="left:1419px;top:724px;width:16px;height:134px;background:linear-gradient(90deg,#e8e8e8,#f0f0f0)"></div>
<div class="a" style="left:1419px;top:858px;width:16px;height:17px;background:#f0f0f0"></div>
<div class="a" style="left:180px;top:858px;width:472px;height:16px;border:1px solid #9a9a9a;border-radius:2px;background:linear-gradient(#f4f4f4 0,#e8e8e8 45%,#d6d6d6 50%,#cfcfcf 100%)"></div>
<div class="a" style="left:413px;top:863px;width:1px;height:6px;background:#555"></div>
<div class="a" style="left:415px;top:863px;width:1px;height:6px;background:#555"></div>
<div class="a" style="left:417px;top:863px;width:1px;height:6px;background:#555"></div>
<svg class="a" style="left:168px;top:862px" width="5" height="8"><path d="M4,0 L0,4 L4,8 Z" fill="#404040"/></svg>
<svg class="a" style="left:1406px;top:862px" width="5" height="8"><path d="M0,0 L4,4 L0,8 Z" fill="#404040"/></svg>
<svg class="a" style="left:1423px;top:732px" width="8" height="5"><path d="M0,4 L4,0 L8,4 Z" fill="#404040"/></svg>
<svg class="a" style="left:1423px;top:846px" width="8" height="5"><path d="M0,0 L8,0 L4,4 Z" fill="#404040"/></svg>
<div class="a" style="left:1419px;top:797px;width:15px;height:42px;border:1px solid #9a9a9a;border-radius:2px;background:linear-gradient(90deg,#f4f4f4 0,#e8e8e8 45%,#d6d6d6 50%,#cfcfcf 100%)"></div>
<div class="a" style="left:1423px;top:814px;width:6px;height:1px;background:#555"></div>
<div class="a" style="left:1423px;top:816px;width:6px;height:1px;background:#555"></div>
<div class="a" style="left:1423px;top:818px;width:6px;height:1px;background:#555"></div>
<div class="a" style="left:1423px;top:820px;width:6px;height:1px;background:#555"></div>

</div>

<!-- STATUS -->
<div class="a" style="left:0;top:880px;width:1440px;height:18px;background:#f0eded;border-top:1px solid #a0a0a0;box-shadow:inset 0 1px 0 #fff"></div><div class="a" style="left:0;top:881px;width:1440px;height:1px;background:#fff"></div><div class="a" style="left:0;top:882px;width:1px;height:16px;background:#fff"></div>
<div class="a" style="left:0;top:878px;width:1438px;height:1px;background:#898c95"></div><div class="a" style="left:0;top:879px;width:1440px;height:1px;background:#fff"></div>
<div class="st" style="left:2px;top:883px">Line:</div>
<div class="st" style="left:41px;top:883px">6</div>
<div class="st" style="left:93px;top:883px">Col:</div>
<div class="st" style="left:125px;top:883px">14</div>
<div class="st" style="left:183px;top:883px">Sel:</div>
<div class="st" style="left:215px;top:883px">0</div>
<div class="st" style="left:267px;top:883px">Lines:</div>
<div class="st" style="left:308px;top:883px">19</div>
<div class="st" style="left:366px;top:883px">Length:</div>
<div class="st" style="left:414px;top:883px">265</div>
<div class="a" style="left:479px;top:881px;width:1px;height:17px;background:#d0cccc"></div>
<div class="st" style="left:484px;top:883px">Insert</div>
<div class="a" style="left:559px;top:881px;width:1px;height:17px;background:#d0cccc"></div>
<div class="st" style="left:564px;top:883px">Done parsing in 0 seconds</div>
<div class="a" style="left:0;top:898px;width:1440px;height:1px;background:#4a5242"></div><div class="a" style="left:0;top:899px;width:1440px;height:1px;background:linear-gradient(90deg,#c8d8b0,#d8e6c4 40%,#c0d0a8)"></div>
</body></html>
